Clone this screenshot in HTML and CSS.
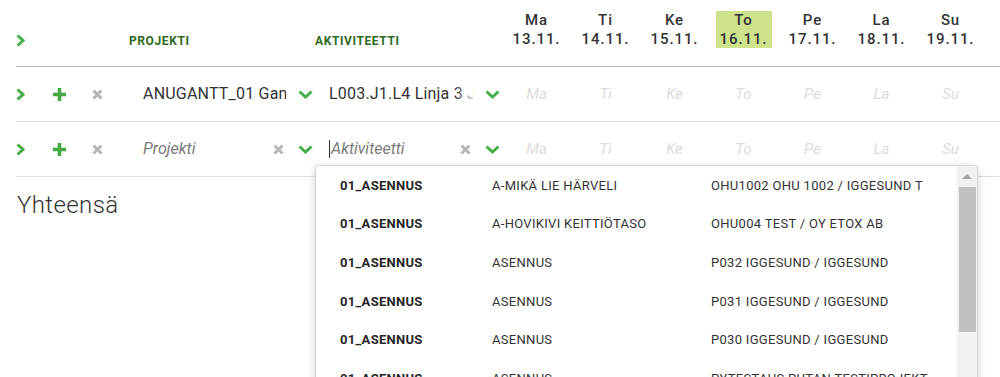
FILE: index.html
```html
<!DOCTYPE html>
<html lang="fi">
<head>
<meta charset="utf-8">
<title>Tuntikirjaus</title>
<link rel="stylesheet" href="styles.css">
</head>
<body>
<div class="sheet">
  <div class="grid header">
    <div class="cell toggle"><svg class="ic-right" width="9" height="13" viewBox="0 0 9 13"><path d="M1.5 1.5 L7 6.5 L1.5 11.5"/></svg></div>
    <div></div><div></div><div></div>
    <div class="label">PROJEKTI</div>
    <div class="label">AKTIVITEETTI</div>
    <div class="day"><div class="day-box">Ma<br>13.11.</div></div>
    <div class="day"><div class="day-box">Ti<br>14.11.</div></div>
    <div class="day"><div class="day-box">Ke<br>15.11.</div></div>
    <div class="day"><div class="day-box today">To<br>16.11.</div></div>
    <div class="day"><div class="day-box">Pe<br>17.11.</div></div>
    <div class="day"><div class="day-box">La<br>18.11.</div></div>
    <div class="day"><div class="day-box">Su<br>19.11.</div></div>
  </div>

  <div class="grid row">
    <div class="cell toggle"><svg class="ic-right" width="9" height="13" viewBox="0 0 9 13"><path d="M1.5 1.5 L7 6.5 L1.5 11.5"/></svg></div>
    <div class="cell center"><svg class="ic-plus" width="13" height="13" viewBox="0 0 13 13"><path d="M6.5 0V13M0 6.5H13"/></svg></div>
    <div class="cell center"><svg class="ic-x" width="11" height="11" viewBox="0 0 11 11"><path d="M1.5 1.5L9.5 9.5M9.5 1.5L1.5 9.5"/></svg></div>
    <div></div>
    <div class="field">
      <div class="field-text">ANUGANTT_01 Gan</div>
      <svg class="ic-down" width="15" height="9" viewBox="0 0 15 9"><path d="M1.5 1.5L7.5 7L13.5 1.5"/></svg>
    </div>
    <div class="field">
      <div class="field-text fade">L003.J1.L4 Linja 3 J</div>
      <svg class="ic-down" width="15" height="9" viewBox="0 0 15 9"><path d="M1.5 1.5L7.5 7L13.5 1.5"/></svg>
    </div>
    <div class="ph">Ma</div><div class="ph">Ti</div><div class="ph">Ke</div><div class="ph">To</div><div class="ph">Pe</div><div class="ph">La</div><div class="ph">Su</div>
  </div>

  <div class="grid row">
    <div class="cell toggle"><svg class="ic-right" width="9" height="13" viewBox="0 0 9 13"><path d="M1.5 1.5 L7 6.5 L1.5 11.5"/></svg></div>
    <div class="cell center"><svg class="ic-plus" width="13" height="13" viewBox="0 0 13 13"><path d="M6.5 0V13M0 6.5H13"/></svg></div>
    <div class="cell center"><svg class="ic-x" width="11" height="11" viewBox="0 0 11 11"><path d="M1.5 1.5L9.5 9.5M9.5 1.5L1.5 9.5"/></svg></div>
    <div></div>
    <div class="field">
      <div class="field-text placeholder">Projekti</div>
      <svg class="ic-x clear" width="11" height="11" viewBox="0 0 11 11"><path d="M1.5 1.5L9.5 9.5M9.5 1.5L1.5 9.5"/></svg>
      <svg class="ic-down" width="15" height="9" viewBox="0 0 15 9"><path d="M1.5 1.5L7.5 7L13.5 1.5"/></svg>
    </div>
    <div class="field active">
      <div class="field-text placeholder"><span class="caret"></span>Aktiviteetti</div>
      <svg class="ic-x clear" width="11" height="11" viewBox="0 0 11 11"><path d="M1.5 1.5L9.5 9.5M9.5 1.5L1.5 9.5"/></svg>
      <svg class="ic-down" width="15" height="9" viewBox="0 0 15 9"><path d="M1.5 1.5L7.5 7L13.5 1.5"/></svg>
      <div class="dropdown">
        <div class="options">
          <div class="opt"><span class="c1">01_ASENNUS</span><span class="c2">A-MIKÄ LIE HÄRVELI</span><span class="c3">OHU1002 OHU 1002 / IGGESUND T</span></div>
          <div class="opt"><span class="c1">01_ASENNUS</span><span class="c2">A-HOVIKIVI KEITTIÖTASO</span><span class="c3">OHU004 TEST / OY ETOX AB</span></div>
          <div class="opt"><span class="c1">01_ASENNUS</span><span class="c2">ASENNUS</span><span class="c3">P032 IGGESUND / IGGESUND</span></div>
          <div class="opt"><span class="c1">01_ASENNUS</span><span class="c2">ASENNUS</span><span class="c3">P031 IGGESUND / IGGESUND</span></div>
          <div class="opt"><span class="c1">01_ASENNUS</span><span class="c2">ASENNUS</span><span class="c3">P030 IGGESUND / IGGESUND</span></div>
          <div class="opt"><span class="c1">01_ASENNUS</span><span class="c2">ASENNUS</span><span class="c3">PYTESTAUS PUTAN TESTIPROJEKT</span></div>
        </div>
        <div class="scrollbar">
          <div class="sb-up"></div>
          <div class="sb-thumb"></div>
        </div>
      </div>
    </div>
    <div class="ph">Ma</div><div class="ph">Ti</div><div class="ph">Ke</div><div class="ph">To</div><div class="ph">Pe</div><div class="ph">La</div><div class="ph">Su</div>
  </div>

  <div class="total">Yhteensä</div>
</div>
</body>
</html>
```

FILE: styles.css
```css
* { box-sizing: border-box; }
html, body { margin: 0; padding: 0; background: #fff; }
body {
  font-family: Roboto, "Noto Sans", "Liberation Sans", sans-serif;
  color: #333;
  overflow: hidden;
  height: 377px;
}
.sheet { padding-left: 16px; }

.grid {
  display: grid;
  grid-template-columns: 30px 27px 48px 8px 186px 187px repeat(7, 69px);
}

.header {
  height: 67px;
  border-bottom: 1px solid #bdbdbd;
}
.header .toggle { align-self: start; margin-top: 34px; height: 13px; }
.label {
  margin-top: 34px;
  font-size: 12px;
  line-height: 14px;
  font-weight: 700;
  letter-spacing: 0.6px;
  color: #2d6a20;
}
.day { display: flex; justify-content: center; align-items: flex-start; }
.day-box {
  margin-top: 11px;
  padding: 0 4px;
  font-size: 15px;
  line-height: 18.5px;
  font-weight: 500;
  letter-spacing: 0.9px;
  text-align: center;
  color: #333;
}
.day-box.today { background: #cde28a; width: 56px; padding: 0; }

.row {
  height: 55px;
  border-bottom: 1px solid #e0e0e0;
  align-items: center;
}
.cell { display: flex; align-items: center; }
.cell.center { justify-content: center; }

.ic-right path, .ic-down path {
  fill: none; stroke: #46ae47; stroke-width: 3; stroke-linecap: butt; stroke-linejoin: miter;
}
.ic-plus path { fill: none; stroke: #45a840; stroke-width: 3.6; }
.ic-x path { fill: none; stroke: #b5b5b5; stroke-width: 3; }

.field {
  position: relative;
  display: flex;
  align-items: center;
  height: 100%;
  padding: 0 2px 0 14px;
}
.field-text {
  flex: 1;
  min-width: 0;
  margin-right: 12px;
  overflow: hidden;
  white-space: nowrap;
  font-size: 16px;
  line-height: 20px;
  letter-spacing: 0.2px;
  color: #333;
}
.field-text.fade { position: relative; }
.field-text.fade::after {
  content: "";
  position: absolute;
  top: 0; right: 0; bottom: 0;
  width: 16px;
  background: linear-gradient(to right, rgba(255,255,255,0.1), rgba(255,255,255,0.75));
}
.placeholder { font-style: italic; color: #7a7a7a; display: flex; align-items: center; letter-spacing: 0; }
.clear { flex: none; margin-right: 14px; }
.caret {
  display: inline-block;
  width: 2px;
  height: 18px;
  background: #333;
  margin-left: -1px;
  margin-right: 1px;
}
.ph {
  text-align: center;
  font-size: 15px;
  font-style: italic;
  color: #dcdcdc;
}

.dropdown {
  position: absolute;
  left: 0;
  top: 43px;
  width: 663px;
  height: 260px;
  background: #fff;
  border: 1px solid #d6d6d6;
  border-radius: 3px;
  box-shadow: 0 2px 8px rgba(0,0,0,0.18);
  display: flex;
  z-index: 5;
  overflow: hidden;
}
.options { flex: 1; }
.opt {
  display: grid;
  grid-template-columns: 152px 219px 1fr;
  height: 38.6px;
  align-items: center;
  padding-left: 24px;
  font-size: 13px;
  letter-spacing: 0.3px;
  color: #333;
  white-space: nowrap;
}
.c1 { font-weight: 700; color: #262626; }
.scrollbar {
  width: 20px;
  flex: none;
  background: #f1f1f1;
  display: flex;
  flex-direction: column;
  align-items: center;
}
.sb-up {
  margin-top: 8px;
  width: 0; height: 0;
  border-left: 5px solid transparent;
  border-right: 5px solid transparent;
  border-bottom: 5px solid #a3a3a3;
}
.sb-thumb {
  margin-top: 8px;
  width: 17px;
  height: 145px;
  background: #c1c1c1;
}

.total {
  padding-top: 14px;
  padding-left: 1px;
  font-size: 24px;
  line-height: 28px;
  font-weight: 300;
  letter-spacing: 0.4px;
  color: #333;
}
```
